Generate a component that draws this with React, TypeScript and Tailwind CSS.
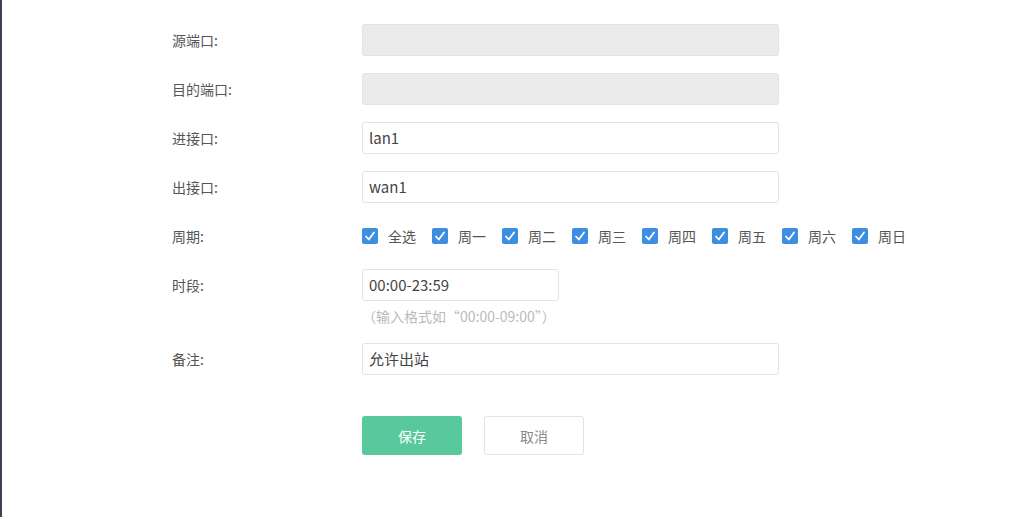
const days = ["全选", "周一", "周二", "周三", "周四", "周五", "周六", "周日"];

function Row({ label, children }: { label: string; children: React.ReactNode }) {
  return (
    <div className="flex items-center">
      <div className="w-[190px] text-sm text-[#555]">{label}:</div>
      {children}
    </div>
  );
}

function Check() {
  return (
    <span className="flex h-4 w-4 items-center justify-center rounded-[2px] bg-[#3d8ee0]">
      <svg viewBox="0 0 16 16" className="h-4 w-4">
        <path d="M4 8.5l2.8 3L12 4.5" fill="none" stroke="#fff" strokeWidth="1.8" strokeLinecap="round" strokeLinejoin="round" />
      </svg>
    </span>
  );
}

export default function App() {
  const input = "h-8 rounded-[3px] border border-[#e3e3e3] px-[6px] text-[15px] text-[#444]";
  return (
    <div className="h-[517px] w-[1024px] overflow-hidden border-l-2 border-[#3b4252] bg-white pl-[170px] pt-6" style={{ fontFamily: '"Noto Sans CJK SC", "Noto Sans", sans-serif' }}>
      <div className="flex flex-col gap-[17px]">
        <Row label="源端口">
          <div className={`${input} w-[417px] bg-[#ebebeb]`} />
        </Row>
        <Row label="目的端口">
          <div className={`${input} w-[417px] bg-[#ebebeb]`} />
        </Row>
        <Row label="进接口">
          <div className={`${input} flex w-[417px] items-center`}>lan1</div>
        </Row>
        <Row label="出接口">
          <div className={`${input} flex w-[417px] items-center`}>wan1</div>
        </Row>
        <Row label="周期">
          <div className="flex h-8 items-center">
            {days.map((d) => (
              <label key={d} className="mr-[16px] flex items-center gap-[10px] text-sm text-[#555]">
                <Check />
                {d}
              </label>
            ))}
          </div>
        </Row>
        <div>
          <Row label="时段">
            <div className={`${input} flex w-[197px] items-center`}>00:00-23:59</div>
          </Row>
          <div className="ml-[190px] mt-[5px] text-sm text-[#bbb]">（输入格式如“00:00-09:00”）</div>
        </div>
        <Row label="备注">
          <div className={`${input} flex w-[417px] items-center`}>允许出站</div>
        </Row>
      </div>
      <div className="ml-[190px] mt-[41px] flex gap-[22px]">
        <button className="h-[39px] w-[100px] rounded-[3px] bg-[#57c99d] text-sm text-white">保存</button>
        <button className="h-[39px] w-[100px] rounded-[3px] border border-[#e3e3e3] bg-white text-sm text-[#888]">取消</button>
      </div>
    </div>
  );
}
